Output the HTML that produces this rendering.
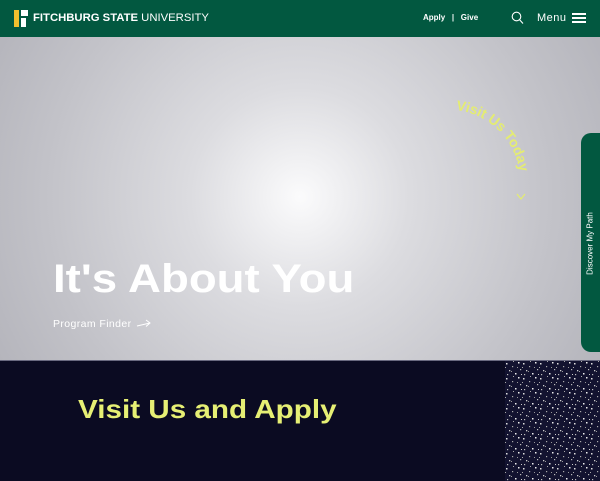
<!DOCTYPE html>
<html><head><style>
*{margin:0;padding:0;box-sizing:border-box}
body{width:600px;height:480px;overflow:hidden;font-family:"Liberation Sans",sans-serif;background:#0b0b22;position:relative}
.hdr{position:absolute;left:0;top:0;width:600px;height:37px;background:#025840;color:#fff}
.hero{position:absolute;left:0;top:37px;width:600px;height:323px;background:radial-gradient(circle at 300px 160px,#fbfbfc 0,#dcdce0 110px,#c3c3c9 250px,#a9a9b1 420px)}
.dark{position:absolute;left:0;top:360px;width:600px;height:120px;background:#0b0b22;border-top:1px solid #6a6a80}
</style></head><body>
<div class="hdr">
  <div style="position:absolute;left:14px;top:10px;width:5px;height:17px;background:#f2c02e"></div>
  <div style="position:absolute;left:21px;top:10px;width:7px;height:6px;background:#fff"></div>
  <div style="position:absolute;left:21px;top:18px;width:5px;height:9px;background:#fff"></div>
  <div style="position:absolute;left:33px;top:12px;font-size:11.3px;white-space:nowrap"><b>FITCHBURG STATE</b> UNIVERSITY</div>
  <div style="position:absolute;left:423px;top:13px;font-size:8px;font-weight:bold">Apply &nbsp;&nbsp;| &nbsp;&nbsp;Give</div>
  <svg style="position:absolute;left:511px;top:11px" width="13" height="14" viewBox="0 0 13 14"><circle cx="5.5" cy="5.5" r="4.3" fill="none" stroke="#fff" stroke-width="1.1"/><line x1="8.6" y1="8.8" x2="12" y2="12.5" stroke="#fff" stroke-width="1.1"/></svg>
  <div style="position:absolute;left:537px;top:12px;font-size:11px;letter-spacing:0.5px">Menu</div>
  <div style="position:absolute;left:572px;top:13px;width:14px;height:1.5px;background:#fff;box-shadow:0 4px 0 #fff,0 8px 0 #fff"></div>
</div>
<div class="hero">
  <div style="position:absolute;left:53px;top:220px;font-size:40px;font-weight:bold;color:#fff;white-space:nowrap;transform:scaleX(1.14);transform-origin:left">It's About You</div>
  <div style="position:absolute;left:53px;top:281px;font-size:10.5px;color:#fff;letter-spacing:0.4px;white-space:nowrap">Program Finder</div>
  <svg style="position:absolute;left:136px;top:282px" width="16" height="10" viewBox="0 0 16 10"><path d="M1 7 L14 4 M10 1 L14 4 L10 7.5" fill="none" stroke="#fff" stroke-width="1"/></svg>
  <div style="position:absolute;left:581px;top:96px;width:19px;height:219px;background:#025840;border-radius:10px 0 0 10px"></div>
  <div style="position:absolute;left:584px;top:202px;width:12px;transform:rotate(-90deg);transform-origin:center;white-space:nowrap;font-size:8px;color:#fff;display:flex;justify-content:center"><span style="white-space:nowrap">Discover My Path</span></div>
</div>
<svg style="position:absolute;left:0;top:0" width="600" height="360">
  <defs><path id="arc" d="M456,110 A72,72 0 0 1 520,186"/></defs>
  <text font-family="Liberation Sans" font-size="14" font-weight="bold" fill="#e4ec72"><textPath href="#arc">Visit Us Today</textPath></text>
  <path d="M517,194 L521,199 L525,194" fill="none" stroke="#e4ec72" stroke-width="1.2"/>
</svg>
<div class="dark">
  <div style="position:absolute;left:78px;top:33px;font-size:26px;font-weight:bold;color:#e6ef74;white-space:nowrap;transform:scaleX(1.14);transform-origin:left">Visit Us and Apply</div>
  <svg style="position:absolute;left:505px;top:0" width="95" height="120">
    <defs><pattern id="st" width="17" height="15" patternUnits="userSpaceOnUse">
      <rect x="1" y="2" width="1.5" height="1.5" fill="#ddd"/><rect x="7" y="5" width="1.2" height="1.2" fill="#aaa"/>
      <rect x="13" y="1" width="1.5" height="1.5" fill="#eee"/><rect x="15" y="8" width="1.2" height="1.2" fill="#bbb"/>
      <rect x="4" y="9" width="1.3" height="1.3" fill="#ccc"/><rect x="10" y="12" width="1.5" height="1.5" fill="#eee"/>
      <rect x="12" y="6" width="1" height="1" fill="#999"/><rect x="2" y="13" width="1.2" height="1.2" fill="#bbb"/>
      <rect x="8" y="0" width="1" height="1" fill="#aaa"/><rect x="6" y="10" width="1" height="1" fill="#999"/>
      <rect x="16" y="13" width="1" height="1" fill="#ccc"/><rect x="0" y="6" width="1" height="1" fill="#aaa"/>
    </pattern></defs>
    <rect width="95" height="120" fill="#131330"/>
    <rect width="95" height="120" fill="url(#st)"/>
  </svg>
</div>
</body></html>
